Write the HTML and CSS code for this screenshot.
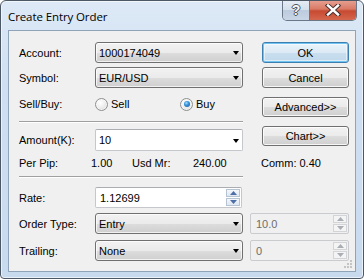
FILE: index.html
```html
<!DOCTYPE html>
<html>
<head>
<meta charset="utf-8">
<link rel="stylesheet" href="styles.css">
</head>
<body>
<div class="window">
  <div class="titlebar">
    <span class="title">Create Entry Order</span>
    <div class="caption-btns">
      <div class="cbtn help"><span class="qmark">?</span></div>
      <div class="cbtn close">
        <svg width="16" height="12" viewBox="0 0 16 12"><path d="M3 1.5 L13 10.5 M13 1.5 L3 10.5" stroke="#4a3030" stroke-width="4.4" stroke-linecap="square"/><path d="M3 1.5 L13 10.5 M13 1.5 L3 10.5" stroke="#ffffff" stroke-width="2.4" stroke-linecap="square"/></svg>
      </div>
    </div>
  </div>
  <div class="client">
    <div class="top">
      <div class="left">
        <div class="row r1">
          <span class="label">Account:</span>
          <div class="combo"><span>1000174049</span><i class="arrow"></i></div>
        </div>
        <div class="row r2">
          <span class="label">Symbol:</span>
          <div class="combo"><span>EUR/USD</span><i class="arrow"></i></div>
        </div>
        <div class="row r3">
          <span class="label">Sell/Buy:</span>
          <div class="radio-group sell"><span class="radio"></span><span>Sell</span></div>
          <div class="radio-group"><span class="radio checked"></span><span>Buy</span></div>
        </div>
        <div class="sep s1"></div>
        <div class="row r4">
          <span class="label">Amount(K):</span>
          <div class="combo editable"><span>10</span><i class="arrow"></i></div>
        </div>
        <div class="row r5">
          <span class="pp-label">Per Pip:</span>
          <span class="pp-val">1.00</span>
          <span class="mr-label">Usd Mr:</span>
          <span>240.00</span>
        </div>
        <div class="sep s2"></div>
      </div>
      <div class="right">
        <div class="btn default b-ok">OK</div>
        <div class="btn b-cancel">Cancel</div>
        <div class="btn b-adv">Advanced&gt;&gt;</div>
        <div class="btn b-chart">Chart&gt;&gt;</div>
        <div class="comm">Comm: 0.40</div>
      </div>
    </div>
    <div class="bottom">
      <div class="row b1">
        <span class="label">Rate:</span>
        <div class="spinedit rate">
          <span>1.12699</span>
          <div class="spins">
            <div class="spin"><svg width="7" height="4" viewBox="0 0 7 4"><path d="M0 4 L3.5 0 L7 4 Z" fill="#4e6ea8"/></svg></div>
            <div class="spin"><svg width="7" height="4" viewBox="0 0 7 4"><path d="M0 0 L3.5 4 L7 0 Z" fill="#4e6ea8"/></svg></div>
          </div>
        </div>
      </div>
      <div class="row b2">
        <span class="label">Order Type:</span>
        <div class="combo"><span>Entry</span><i class="arrow"></i></div>
        <div class="spinedit disabled">
          <span>10.0</span>
          <div class="spins">
            <div class="spin"><svg width="7" height="4" viewBox="0 0 7 4"><path d="M0 4 L3.5 0 L7 4 Z" fill="#a9aeb4"/></svg></div>
            <div class="spin"><svg width="7" height="4" viewBox="0 0 7 4"><path d="M0 0 L3.5 4 L7 0 Z" fill="#a9aeb4"/></svg></div>
          </div>
        </div>
      </div>
      <div class="row b3">
        <span class="label">Trailing:</span>
        <div class="combo"><span>None</span><i class="arrow"></i></div>
        <div class="spinedit disabled">
          <span>0</span>
          <div class="spins">
            <div class="spin"><svg width="7" height="4" viewBox="0 0 7 4"><path d="M0 4 L3.5 0 L7 4 Z" fill="#a9aeb4"/></svg></div>
            <div class="spin"><svg width="7" height="4" viewBox="0 0 7 4"><path d="M0 0 L3.5 4 L7 0 Z" fill="#a9aeb4"/></svg></div>
          </div>
        </div>
      </div>
    </div>
    <svg class="grip" width="9" height="9" viewBox="0 0 9 9">
      <rect x="6" y="0" width="2" height="2" fill="#c4c4c4"/>
      <rect x="3" y="3" width="2" height="2" fill="#c4c4c4"/>
      <rect x="6" y="3" width="2" height="2" fill="#c4c4c4"/>
      <rect x="0" y="6" width="2" height="2" fill="#c4c4c4"/>
      <rect x="3" y="6" width="2" height="2" fill="#c4c4c4"/>
      <rect x="6" y="6" width="2" height="2" fill="#c4c4c4"/>
    </svg>
  </div>
</div>
</body>
</html>
```
FILE: styles.css
```css
html, body {
  margin: 0;
  padding: 0;
  background: #ffffff;
}
.window {
  width: 364px;
  height: 279px;
  box-sizing: border-box;
  border: 1px solid #4d5866;
  border-radius: 6px 6px 4px 4px;
  background: linear-gradient(to bottom, #dde9f6 0%, #d0e0f2 30%, #c8daee 100%);
  box-shadow: inset 0 0 0 1px rgba(255,255,255,0.6);
  overflow: hidden;
}
.titlebar {
  position: relative;
  height: 29px;
  display: flex;
  align-items: center;
  padding-left: 7px;
}
.title {
  font-family: "Open Sans", "Liberation Sans", sans-serif;
  font-size: 11.5px;
  color: #000;
  letter-spacing: -0.1px;
  margin-top: 1px;
}
.caption-btns {
  position: absolute;
  top: -1px;
  right: 6px;
  display: flex;
  height: 20px;
  border: 1px solid #6b7786;
  border-top: none;
  border-radius: 0 0 5px 5px;
  overflow: hidden;
}
.cbtn {
  height: 20px;
  display: flex;
  align-items: center;
  justify-content: center;
}
.help {
  width: 26px;
  border-right: 1px solid #6b7786;
  background: linear-gradient(to bottom, #e6edf5 0%, #d4dfec 50%, #bccbdd 51%, #c8d6e6 100%);
}
.qmark {
  font-family: "Liberation Sans", sans-serif;
  font-weight: bold;
  font-size: 14px;
  color: #f4f6f8;
  text-shadow: 1px 0 0 #4b5563, -1px 0 0 #4b5563, 0 1px 0 #4b5563, 0 -1px 0 #4b5563;
  line-height: 1;
}
.close {
  width: 46px;
  background: linear-gradient(to bottom, #e8a294 0%, #d97a66 45%, #c74a31 55%, #d4674e 100%);
}
.client {
  margin: 0 7px;
  height: 242px;
  box-sizing: border-box;
  border: 1px solid #8fa3b9;
  background: #f0f0f0;
  padding: 11px 6px 0 10px;
  position: relative;
  font-family: "Liberation Sans", Arial, sans-serif;
  font-size: 11px;
  color: #000;
}
.top {
  display: flex;
  justify-content: space-between;
}
.left {
  width: 224px;
  display: flex;
  flex-direction: column;
}
.row {
  display: flex;
  align-items: center;
}
.label {
  width: 76px;
  flex: none;
}
.r1 { height: 21px; margin-bottom: 4px; }
.r2 { height: 21px; margin-bottom: 6px; }
.r3 { height: 20px; margin-bottom: 7px; }
.r4 { height: 22px; margin-bottom: 5px; }
.r5 { height: 14px; margin-bottom: 6px; }
.sep {
  height: 1px;
  background: #a0a0a0;
  border-bottom: 1px solid #ffffff;
}
.s1 { margin-bottom: 6px; }
.combo {
  width: 148px;
  height: 100%;
  box-sizing: border-box;
  border: 1px solid #707070;
  border-radius: 3px;
  background: linear-gradient(to bottom, #f2f2f2 0%, #ebebeb 50%, #dddddd 51%, #cfcfcf 100%);
  box-shadow: inset 0 0 0 1px rgba(255,255,255,0.7);
  display: flex;
  align-items: center;
  justify-content: space-between;
  padding: 0 3px 0 3px;
  flex: none;
}
.combo.editable {
  background: #ffffff;
  border-color: #c5c7cc;
  border-top-color: #abadb3;
  border-radius: 2px;
  box-shadow: none;
}
.arrow {
  width: 0;
  height: 0;
  border-left: 3.5px solid transparent;
  border-right: 3.5px solid transparent;
  border-top: 4px solid #000;
  margin-top: 1px;
}
.radio-group {
  display: flex;
  align-items: center;
  gap: 3px;
}
.radio-group.sell { width: 85px; }
.radio {
  width: 13px;
  height: 13px;
  box-sizing: border-box;
  border-radius: 50%;
  border: 1px solid #8e8f8f;
  background: radial-gradient(circle at 40% 35%, #ffffff 0%, #f1f1f1 40%, #d2d2d2 100%);
  box-shadow: inset 0 0 0 1px rgba(255,255,255,0.6);
  position: relative;
}
.radio.checked::after {
  content: "";
  position: absolute;
  left: 2.5px;
  top: 2.5px;
  width: 6px;
  height: 6px;
  border-radius: 50%;
  background: radial-gradient(circle at 40% 35%, #a6e0ff 0%, #3f9ae0 35%, #0b4f9a 100%);
}
.pp-label { width: 72px; }
.pp-val { width: 41px; }
.mr-label { width: 61px; }
.right {
  width: 87px;
  display: flex;
  flex-direction: column;
}
.btn {
  box-sizing: border-box;
  border: 1px solid #707070;
  border-radius: 3px;
  background: linear-gradient(to bottom, #f2f2f2 0%, #ebebeb 50%, #dddddd 51%, #cfcfcf 100%);
  box-shadow: inset 0 0 0 1px rgba(255,255,255,0.8);
  display: flex;
  align-items: center;
  justify-content: center;
}
.btn.default {
  border-color: #3c7fb1;
  background: linear-gradient(to bottom, #eaf4fb 0%, #dceaf5 50%, #c9dfef 51%, #bfd8ea 100%);
  box-shadow: inset 0 0 0 1px #6fc4f2, inset 0 0 0 2px rgba(255,255,255,0.5);
}
.b-ok { height: 21px; margin-bottom: 4px; }
.b-cancel { height: 21px; margin-bottom: 9px; }
.b-adv { height: 20px; margin-bottom: 9px; }
.b-chart { height: 20px; margin-bottom: 10px; }
.comm {
  height: 14px;
  display: flex;
  align-items: center;
  margin-left: -1px;
}
.bottom {
  margin-top: 9px;
  display: flex;
  flex-direction: column;
}
.b1 { height: 21px; margin-bottom: 5px; }
.b2 { height: 21px; margin-bottom: 6px; }
.b3 { height: 21px; }
.spinedit {
  height: 100%;
  box-sizing: border-box;
  border: 1px solid #c5c7cc;
  border-top-color: #abadb3;
  border-radius: 2px;
  background: #ffffff;
  display: flex;
  align-items: center;
  justify-content: space-between;
  padding: 0 1px 0 4px;
  flex: none;
}
.spinedit.rate { width: 147px; }
.spinedit.disabled {
  width: 99px;
  margin-left: 7px;
  background: #f0f0f0;
  border-color: #c9cbcf;
  color: #6d6d6d;
  padding-left: 5px;
}
.spins {
  width: 14px;
  height: 17px;
  display: flex;
  flex-direction: column;
  gap: 1px;
}
.spin {
  flex: 1;
  box-sizing: border-box;
  border: 1px solid #b6c3d3;
  background: linear-gradient(to bottom, #f4f7fb, #dfe7f1);
  display: flex;
  align-items: center;
  justify-content: center;
}
.disabled .spin {
  border-color: #d2d4d7;
  background: #f4f4f4;
}
.grip {
  position: absolute;
  right: 2px;
  bottom: 2px;
}
```
